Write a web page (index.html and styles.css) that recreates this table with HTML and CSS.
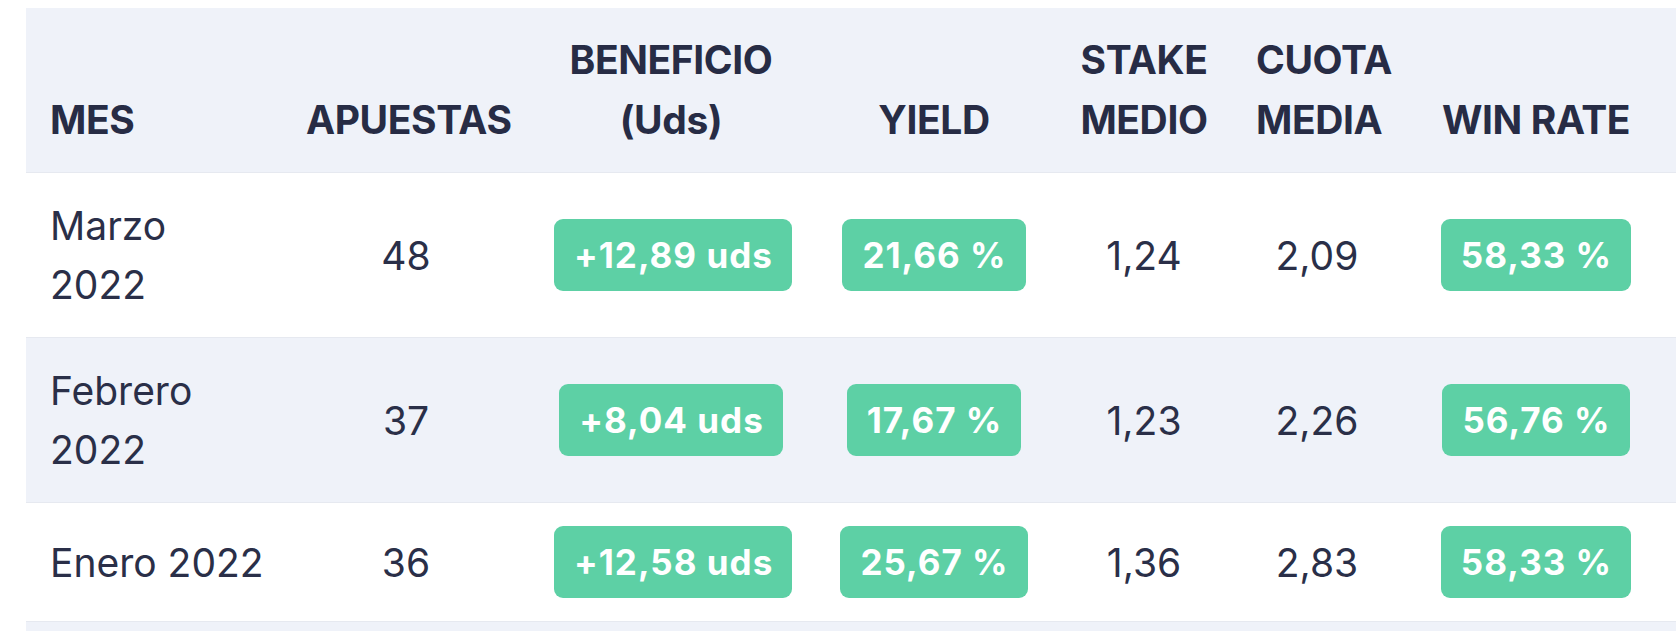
FILE: index.html
```html
<!DOCTYPE html>
<html lang="es">
<head>
<meta charset="utf-8">
<title>Resultados mensuales</title>
<link rel="stylesheet" href="styles.css">
</head>
<body>
<table class="stats">
  <colgroup>
    <col class="c-mes">
    <col class="c-apu">
    <col class="c-ben">
    <col class="c-yield">
    <col class="c-stake">
    <col class="c-cuota">
    <col class="c-win">
  </colgroup>
  <thead>
    <tr>
      <th class="left">MES</th>
      <th>APUESTAS</th>
      <th>BENEFICIO<br>(Uds)</th>
      <th>YIELD</th>
      <th>STAKE<br>MEDIO</th>
      <th>CUOTA<br>MEDIA</th>
      <th class="last">WIN RATE</th>
    </tr>
  </thead>
  <tbody>
    <tr>
      <td class="left">Marzo 2022</td>
      <td>48</td>
      <td><span class="badge">+12,89 uds</span></td>
      <td><span class="badge">21,66 %</span></td>
      <td>1,24</td>
      <td>2,09</td>
      <td class="last"><span class="badge">58,33 %</span></td>
    </tr>
    <tr class="alt">
      <td class="left">Febrero 2022</td>
      <td>37</td>
      <td><span class="badge">+8,04 uds</span></td>
      <td><span class="badge">17,67 %</span></td>
      <td>1,23</td>
      <td>2,26</td>
      <td class="last"><span class="badge">56,76 %</span></td>
    </tr>
    <tr>
      <td class="left">Enero 2022</td>
      <td>36</td>
      <td><span class="badge">+12,58 uds</span></td>
      <td><span class="badge">25,67 %</span></td>
      <td>1,36</td>
      <td>2,83</td>
      <td class="last"><span class="badge">58,33 %</span></td>
    </tr>
    <tr class="alt">
      <td class="left">&nbsp;</td>
      <td></td><td></td><td></td><td></td><td></td><td class="last"></td>
    </tr>
  </tbody>
</table>
</body>
</html>
```

FILE: styles.css
```css
html, body {
  margin: 0;
  padding: 0;
  background: #ffffff;
  overflow: hidden;
}

body {
  padding: 8px 0 0 26px;
  font-family: Inter, "Liberation Sans", sans-serif;
  color: #272c45;
}

.stats {
  border-collapse: collapse;
  table-layout: fixed;
  width: 1676px;
}

.c-mes { width: 256px; }
.c-apu { width: 248px; }
.c-ben { width: 282px; }
.c-yield { width: 244px; }
.c-stake { width: 176px; }
.c-cuota { width: 170px; }
.c-win { width: 300px; }

.stats th,
.stats td {
  padding: 22px 24px;
  text-align: center;
  border-bottom: 1px solid #e6e9f0;
}

.stats th {
  background: #eff2f9;
  font-size: 39px;
  line-height: 60px;
  font-weight: 700;
  letter-spacing: -0.4px;
  vertical-align: bottom;
  color: #272c45;
}

.stats td {
  padding-top: 23px;
  padding-bottom: 23px;
  font-size: 39px;
  line-height: 59px;
  font-weight: 400;
  vertical-align: middle;
  color: #2a2f48;
}

.stats .left {
  text-align: left;
  padding-right: 17px;
}

.stats .last {
  padding-right: 56px;
}

.stats tr.alt td {
  background: #eff2f9;
}

.badge {
  display: inline-block;
  vertical-align: middle;
  background: #5dd0a5;
  color: #ffffff;
  font-weight: 700;
  font-size: 35px;
  line-height: 50px;
  letter-spacing: 1px;
  padding: 11px 19px 11px 20px;
  border-radius: 9px;
  white-space: nowrap;
}
```
